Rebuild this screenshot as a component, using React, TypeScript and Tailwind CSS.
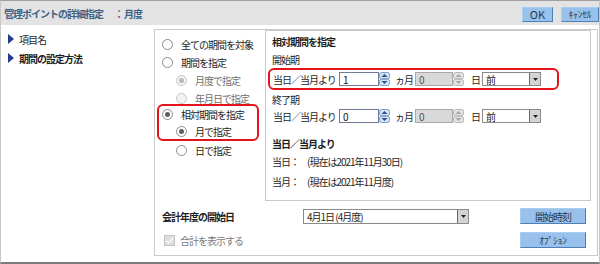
import React from 'react';

function Radio({ checked, disabled }: { checked?: boolean; disabled?: boolean }) {
    return (
        <span className={`flex h-[11px] w-[11px] shrink-0 items-center justify-center rounded-full border ${disabled ? 'border-[#c8c8c8] bg-[#f3f3f3]' : 'border-[#8a8a8a] bg-white'}`}>
            {checked && <span className={`h-[5px] w-[5px] rounded-full ${disabled ? 'bg-[#b8b8b8]' : 'bg-[#5e5e5e]'}`} />}
        </span>
    );
}

function RadioRow({ label, checked, disabled, indent, h = 'h-[18px]' }: { label: string; checked?: boolean; disabled?: boolean; indent?: boolean; h?: string }) {
    return (
        <div className={`flex items-center gap-2 ${h} ${indent ? 'pl-[14px]' : ''}`}>
            <Radio checked={checked} disabled={disabled} />
            <span className={disabled ? 'text-[#6e6e6e]' : 'text-[#1e1e1e]'}>{label}</span>
        </div>
    );
}

function Spinner({ disabled }: { disabled?: boolean }) {
    const fill = disabled ? '#a6a6a6' : '#2c4f92';
    const bg = disabled ? '#e4e4e4' : '#d3e3f6';
    const stroke = disabled ? '#b4b4b4' : '#7f9dc0';
    return (
        <svg width="11" height="14" viewBox="0 0 11 14" className="shrink-0">
            <rect x="0.5" y="0.5" width="10" height="6.2" rx="2" fill={bg} stroke={stroke} />
            <rect x="0.5" y="7.3" width="10" height="6.2" rx="2" fill={bg} stroke={stroke} />
            <path d="M2.5 5 L5.5 2 L8.5 5 Z" fill={fill} />
            <path d="M2.5 9 L5.5 12 L8.5 9 Z" fill={fill} />
        </svg>
    );
}

function SelectArrow() {
    return (
        <span className="flex h-full w-[11px] items-center justify-center border-l border-[#6a6a6a] bg-[#d4d4d4]">
            <svg width="5" height="3" viewBox="0 0 5 3">
                <path d="M0 0H5L2.5 3Z" fill="#222" />
            </svg>
        </span>
    );
}

function PeriodRow({ value, pl }: { value: string; pl: string }) {
    return (
        <div className={`flex h-[16px] items-center ${pl}`}>
            <span className="w-[66px]">当日／当月より</span>
            <span className="flex h-[14px] w-[40px] items-center border border-[#6f7a96] bg-white pl-[3px] text-[#111]">{value}</span>
            <Spinner />
            <span className="ml-[5px] w-[20px]">ヵ月</span>
            <span className="flex h-[14px] w-[38px] items-center border border-[#a8a8a8] bg-[#d9d9d9] pl-[3px] text-[#555]">0</span>
            <Spinner disabled />
            <span className="ml-[7px] w-[11px]">日</span>
            <span className="flex h-[14px] w-[59px] items-center justify-between border border-[#8a8a8a] bg-white pl-[3px]">
                <span>前</span>
                <SelectArrow />
            </span>
        </div>
    );
}

function BlueButton({ children, w, h }: { children: React.ReactNode; w: string; h: string }) {
    return (
        <button className={`flex ${w} ${h} items-center justify-center border border-[#a9cdf0] border-b-[#4d7fb8] border-r-[#4d7fb8] bg-[#98c2eb] text-[#243a56]`}>
            {children}
        </button>
    );
}

export default function App() {
    return (
        <div className="flex h-[264px] w-[600px] flex-col border-t border-l border-r border-b-2 border-t-[#a0a0a0] border-l-[#c8c8c8] border-r-[#c8c8c8] border-b-[#7c7c7c] bg-white font-['Noto_Sans_CJK_JP',sans-serif] text-[10px] tracking-[-1px] text-[#1e1e1e]">
            {/* Header */}
            <div className="flex h-[24px] items-center justify-between bg-[#e3e3e3] pl-[3px]">
                <div className="font-bold text-[#3f6085]">
                    管理ポイントの詳細指定<span className="ml-[11px]">：</span><span className="ml-[1px]">月度</span>
                </div>
                <div className="flex items-center gap-[8px] pt-[3px]">
                    <BlueButton w="w-[31px]" h="h-[15px]">
                        <span className="text-[11px] tracking-normal">OK</span>
                    </BlueButton>
                    <BlueButton w="w-[38px]" h="h-[15px]">
                        <span className="text-[9.5px] tracking-[-0.2px]">ｷｬﾝｾﾙ</span>
                    </BlueButton>
                </div>
            </div>

            {/* Body */}
            <div className="flex flex-1 pt-[4px] pr-[1px]">
                {/* Left nav */}
                <div className="flex w-[153px] flex-col pl-[7px] pt-[1px]">
                    <div className="flex h-[18px] items-center gap-[5px]">
                        <svg width="6" height="10" viewBox="0 0 6 10"><path d="M0 0L6 5L0 10Z" fill="#233c8e" /></svg>
                        <span>項目名</span>
                    </div>
                    <div className="mt-px flex h-[18px] items-center gap-[5px]">
                        <svg width="6" height="10" viewBox="0 0 6 10"><path d="M0 0L6 5L0 10Z" fill="#233c8e" /></svg>
                        <span className="font-bold">期間の設定方法</span>
                    </div>
                </div>

                {/* Group box */}
                <div className="flex h-[227px] flex-1 flex-col border border-[#c9c9c9]">
                    <div className="flex">
                        {/* Radios */}
                        <div className="flex w-[110px] flex-col pt-[5px]">
                            <div className="pl-[7px]">
                                <RadioRow label="全ての期間を対象" />
                                <RadioRow label="期間を指定" />
                                <RadioRow label="月度で指定" checked disabled indent />
                                <RadioRow label="年月日で指定" disabled indent />
                            </div>
                            <div className="ml-[2px] -mt-[3px] w-[102px] rounded-[6px] border-2 border-[#e3141c] pl-[3px]">
                                <RadioRow label="相対期間を指定" checked h="h-[17px]" />
                                <RadioRow label="月で指定" checked indent h="h-[16px]" />
                            </div>
                            <div className="pl-[7px]">
                                <RadioRow label="日で指定" indent />
                            </div>
                        </div>

                        {/* Relative period box */}
                        <div className="mr-[6px] flex h-[171px] flex-1 flex-col border border-[#c9c9c9]">
                            <div className="flex h-[18px] items-center pl-[6px] pt-[3px] font-bold">相対期間を指定</div>
                            <div className="mt-[1px] flex h-[18px] items-center pl-[6px]">開始期</div>
                            <div className="ml-[2px] flex h-[22px] w-[291px] items-center rounded-[6px] border-2 border-[#e3141c]">
                                <PeriodRow value="1" pl="pl-[3px]" />
                            </div>
                            <div className="flex h-[18px] items-center pl-[6px]">終了期</div>
                            <PeriodRow value="0" pl="pl-[7px]" />
                            <div className="mt-[10px] flex h-[18px] items-center pl-[6px] font-bold">当日／当月より</div>
                            <div className="flex h-[18px] items-center pl-[6px]">
                                当日：<span className="ml-[8px]">(現在は2021年11月30日)</span>
                            </div>
                            <div className="mt-[2px] flex h-[18px] items-center pl-[6px]">
                                当月：<span className="ml-[8px]">(現在は2021年11月度)</span>
                            </div>
                        </div>
                    </div>

                    {/* Bottom rows */}
                    <div className="mt-[6px] flex h-[18px] items-center pl-[7px] pr-[11px]">
                        <span className="w-[141px] font-bold">会計年度の開始日</span>
                        <span className="flex h-[15px] w-[166px] items-center justify-between border border-[#8a8a8a] bg-white pl-[3px]">
                            <span>4月1日 (4月度)</span>
                            <SelectArrow />
                        </span>
                        <div className="ml-auto">
                            <BlueButton w="w-[66px]" h="h-[16px]">開始時刻</BlueButton>
                        </div>
                    </div>
                    <div className="mt-[6px] flex h-[18px] items-center pl-[9px] pr-[11px]">
                        <span className="flex h-[11px] w-[11px] items-center justify-center border border-[#c4c4c4] bg-[#dedede]">
                            <svg width="9" height="7" viewBox="0 0 9 7"><path d="M1 3.5L3.5 6L8 1" stroke="#f8f8f8" strokeWidth="1.6" fill="none" /></svg>
                        </span>
                        <span className="ml-[5px] text-[#7a7a7a]">合計を表示する</span>
                        <div className="ml-auto">
                            <BlueButton w="w-[66px]" h="h-[16px]">
                                <span className="text-[9.5px] tracking-[-0.2px]">ｵﾌﾟｼｮﾝ</span>
                            </BlueButton>
                        </div>
                    </div>
                </div>
            </div>
        </div>
    );
}
